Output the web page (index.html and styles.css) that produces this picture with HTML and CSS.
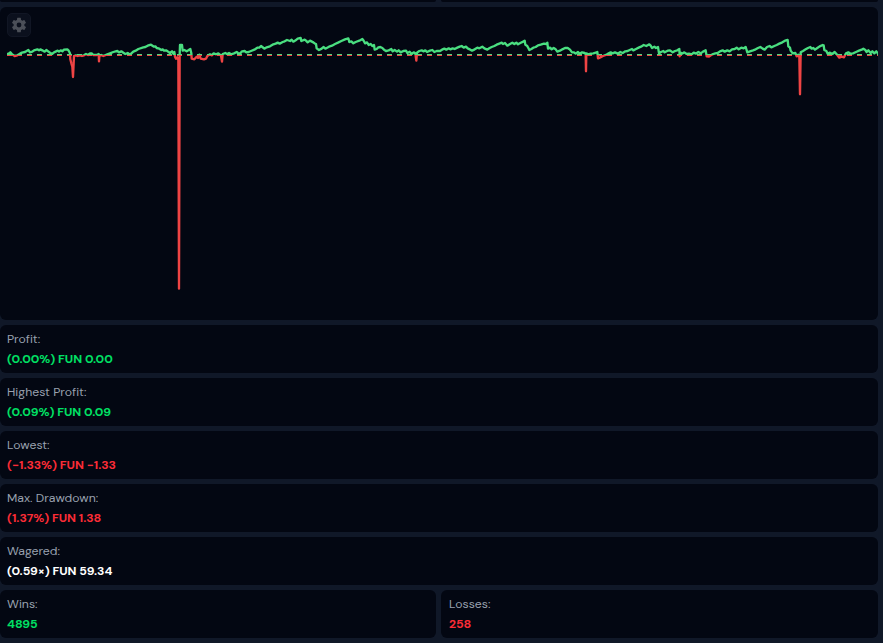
FILE: index.html
```html
<!DOCTYPE html>
<html lang="en">
<head>
    <meta charset="UTF-8">
    <meta name="viewport" content="width=device-width, initial-scale=1.0">
    <title>Live Stats</title>
    <link rel="stylesheet" href="styles.css">
</head>
<body>
    <div class="stats">
        <div class="row">
            <div class="card card-cut"></div>
            <div class="card card-cut"></div>
        </div>
        <div class="card chart">
            <svg class="chart-svg" viewBox="0 21 2634 939" preserveAspectRatio="none">
                <defs>
                    <clipPath id="above"><rect x="21" y="21" width="2613" height="144"/></clipPath>
                    <clipPath id="below"><rect x="21" y="165" width="2613" height="795"/></clipPath>
                    <g id="line">
                        <path class="zero" d="M21 165H2634"/>
                        <polyline points="21,162 26,161 31,157 36,163 44,168 52,166 60,161 66,158 75,156 80,153 85,150 90,157 97,155 102,151 112,148 117,151 121,148 127,151 134,155 139,150 144,154 150,158 156,162 162,157 173,152 177,155 182,151 187,154 192,149 202,148 206,152 210,160 211,178 214,190 217,200 219,231 221,190 222,168 228,166 233,168 240,166 246,168 252,166 258,162 264,165 270,160 275,160 280,165 290,165 296,162 297,184 298,168 304,165 310,168 320,164 330,160 340,156 347,154 352,153 357,157 364,154 370,158 376,162 383,159 390,164 400,155 407,152 415,147 430,142 436,141 443,137 453,134 462,140 466,139 470,144 478,146 484,150 488,148 492,152 498,151 503,154 510,159 516,154 520,161 523,156 525,170 528,176 532,172 535,180 537,866 539,165 540,135 546,135 548,152 553,150 560,154 565,151 571,147 574,160 575,176 583,178 590,170 594,174 598,164 602,176 612,178 618,176 622,168 630,163 636,166 641,160 648,163 655,160 663,167 666,185 668,162 676,159 681,162 687,159 694,163 702,160 710,156 714,159 720,161 726,154 734,153 739,157 746,156 753,153 763,149 772,143 778,143 783,138 787,141 793,146 800,142 810,139 820,133 827,131 833,128 839,131 848,126 854,124 861,120 870,123 875,119 880,125 887,121 893,116 902,114 904,123 914,119 918,122 923,127 930,122 940,127 945,131 948,132 950,145 957,150 965,146 971,141 976,146 987,140 996,137 1005,132 1014,128 1024,123 1035,118 1045,115 1048,126 1054,124 1060,130 1067,126 1078,122 1087,117 1091,122 1095,130 1101,127 1106,135 1112,132 1117,138 1122,135 1124,149 1130,147 1135,142 1141,141 1147,144 1152,149 1158,153 1166,151 1174,147 1178,154 1184,150 1191,155 1196,151 1202,157 1210,153 1218,152 1222,159 1229,155 1235,162 1241,157 1246,160 1249,182 1251,158 1258,153 1265,151 1270,154 1276,151 1281,156 1290,152 1297,150 1303,156 1310,153 1320,153 1326,149 1333,146 1339,149 1346,145 1351,148 1358,145 1364,147 1372,143 1379,140 1385,138 1391,143 1398,140 1403,145 1409,148 1416,152 1424,148 1432,143 1438,145 1447,140 1453,145 1462,149 1469,144 1475,141 1483,138 1490,134 1500,130 1505,128 1509,132 1515,129 1522,137 1530,132 1537,128 1543,132 1549,128 1554,133 1561,129 1571,124 1574,122 1576,134 1581,137 1585,144 1588,150 1594,147 1600,143 1607,141 1614,136 1622,134 1632,131 1639,132 1642,128 1644,146 1650,143 1655,148 1661,144 1667,148 1672,155 1680,152 1687,148 1695,144 1703,144 1710,149 1716,157 1722,157 1727,161 1734,156 1739,161 1746,157 1754,159 1757,161 1758,214 1759,160 1765,163 1772,161 1780,160 1787,158 1792,156 1794,175 1801,172 1809,168 1820,164 1826,160 1832,157 1838,160 1845,157 1853,161 1861,156 1868,159 1876,154 1883,153 1889,150 1896,147 1900,151 1908,147 1916,143 1923,140 1931,135 1939,138 1948,133 1952,137 1956,144 1963,140 1968,144 1974,141 1977,160 1983,156 1990,153 1994,157 2003,152 2010,151 2018,157 2025,153 2032,151 2038,147 2039,169 2041,157 2046,161 2053,157 2060,162 2067,161 2075,163 2081,158 2088,161 2095,156 2102,160 2109,155 2117,151 2120,169 2127,170 2137,163 2146,160 2153,159 2160,154 2168,151 2174,155 2182,151 2189,154 2196,148 2204,147 2210,143 2216,148 2224,143 2231,145 2237,141 2242,157 2250,154 2259,151 2267,148 2274,144 2281,141 2288,146 2294,149 2301,141 2309,138 2314,142 2323,138 2330,135 2338,131 2347,127 2355,122 2363,120 2365,139 2370,143 2372,152 2378,160 2386,159 2390,169 2395,164 2398,172 2400,283 2402,157 2409,153 2417,148 2424,144 2431,141 2435,146 2440,144 2445,149 2452,144 2459,139 2468,135 2471,136 2473,150 2479,153 2483,161 2490,158 2497,162 2504,156 2510,163 2518,173 2525,170 2532,172 2538,160 2545,157 2552,161 2559,160 2568,156 2577,152 2585,149 2590,146 2596,150 2600,156 2605,151 2612,159 2617,154 2623,160 2629,154 2634,161"/>
                    </g>
                </defs>
                <use href="#line" class="up" clip-path="url(#above)"/>
                <use href="#line" class="down" clip-path="url(#below)"/>
            </svg>
            <button class="settings" aria-label="Settings">
                <svg viewBox="0 0 24 24" width="18" height="18"><path d="M19.14 12.94c.04-.3.06-.61.06-.94s-.02-.64-.07-.94l2.03-1.58a.49.49 0 0 0 .12-.61l-1.92-3.32a.49.49 0 0 0-.59-.22l-2.39.96a7 7 0 0 0-1.62-.94l-.36-2.54a.48.48 0 0 0-.48-.41h-3.84a.47.47 0 0 0-.47.41l-.36 2.54c-.59.24-1.13.57-1.62.94l-2.39-.96a.48.48 0 0 0-.59.22L2.74 8.87a.47.47 0 0 0 .12.61l2.03 1.58a7 7 0 0 0 0 1.88l-2.03 1.58a.49.49 0 0 0-.12.61l1.92 3.32c.12.22.37.29.59.22l2.39-.96c.5.38 1.03.7 1.62.94l.36 2.54c.05.24.24.41.48.41h3.84c.24 0 .44-.17.47-.41l.36-2.54c.59-.24 1.13-.56 1.62-.94l2.39.96c.22.08.47 0 .59-.22l1.92-3.32a.47.47 0 0 0-.12-.61zM12 15.2a3.2 3.2 0 1 1 0-6.4 3.2 3.2 0 0 1 0 6.4z"/></svg>
            </button>
        </div>
        <div class="card">
            <span class="label">Profit:</span>
            <span class="value green">(0.00%) FUN 0.00</span>
        </div>
        <div class="card">
            <span class="label">Highest Profit:</span>
            <span class="value green">(0.09%) FUN 0.09</span>
        </div>
        <div class="card">
            <span class="label">Lowest:</span>
            <span class="value red">(−1.33%) FUN −1.33</span>
        </div>
        <div class="card">
            <span class="label">Max. Drawdown:</span>
            <span class="value red">(1.37%) FUN 1.38</span>
        </div>
        <div class="card">
            <span class="label">Wagered:</span>
            <span class="value">(0.59×) FUN 59.34</span>
        </div>
        <div class="row">
            <div class="card">
                <span class="label">Wins:</span>
                <span class="value green">4895</span>
            </div>
            <div class="card card-right">
                <span class="label">Losses:</span>
                <span class="value red">258</span>
            </div>
        </div>
    </div>
</body>
</html>
```
FILE: styles.css
```css
body {
    margin: 0;
    height: 643px;
    overflow: hidden;
    background: #101828;
    font-family: "DM Sans", Inter, "Liberation Sans", sans-serif;
}
.stats {
    display: flex;
    flex-direction: column;
    gap: 5px;
    width: 878px;
}
.row {
    display: grid;
    grid-template-columns: 436px 437px;
    gap: 5px;
}
.card {
    display: flex;
    flex-direction: column;
    box-sizing: border-box;
    height: 48px;
    padding: 4px 7px;
    border-radius: 6px;
    background: #030712;
}
.card-right {
    padding-left: 8px;
}
.card-cut {
    height: 2px;
    padding: 0;
    border-radius: 0 0 6px 6px;
}
.chart {
    position: relative;
    height: 313px;
    padding: 0;
}
.chart-svg {
    display: block;
    width: 878px;
    height: 313px;
}
.chart-svg polyline,
.zero {
    fill: none;
    stroke-width: 6;
    stroke-linejoin: round;
}
.chart-svg polyline {
    stroke-width: 7;
}
.zero {
    stroke-dasharray: 15 15;
}
.up {
    stroke: #4ade80;
}
.down {
    stroke: #ef4444;
}
.settings {
    position: absolute;
    top: 6px;
    left: 7px;
    display: flex;
    align-items: center;
    justify-content: center;
    width: 24px;
    height: 24px;
    padding: 0;
    border: 1px solid #111624;
    border-radius: 5px;
    background: #0b101d;
}
.settings svg {
    flex: none;
    fill: #4b4f58;
}
.label,
.value {
    font-size: 12.25px;
    line-height: 20px;
    white-space: nowrap;
}
.label {
    color: #99a1af;
    letter-spacing: 0.02px;
}
.value {
    color: #fff;
    font-weight: 700;
    letter-spacing: -0.04px;
}
.green {
    color: #00e064;
}
.red {
    color: #fb2c36;
}
```
